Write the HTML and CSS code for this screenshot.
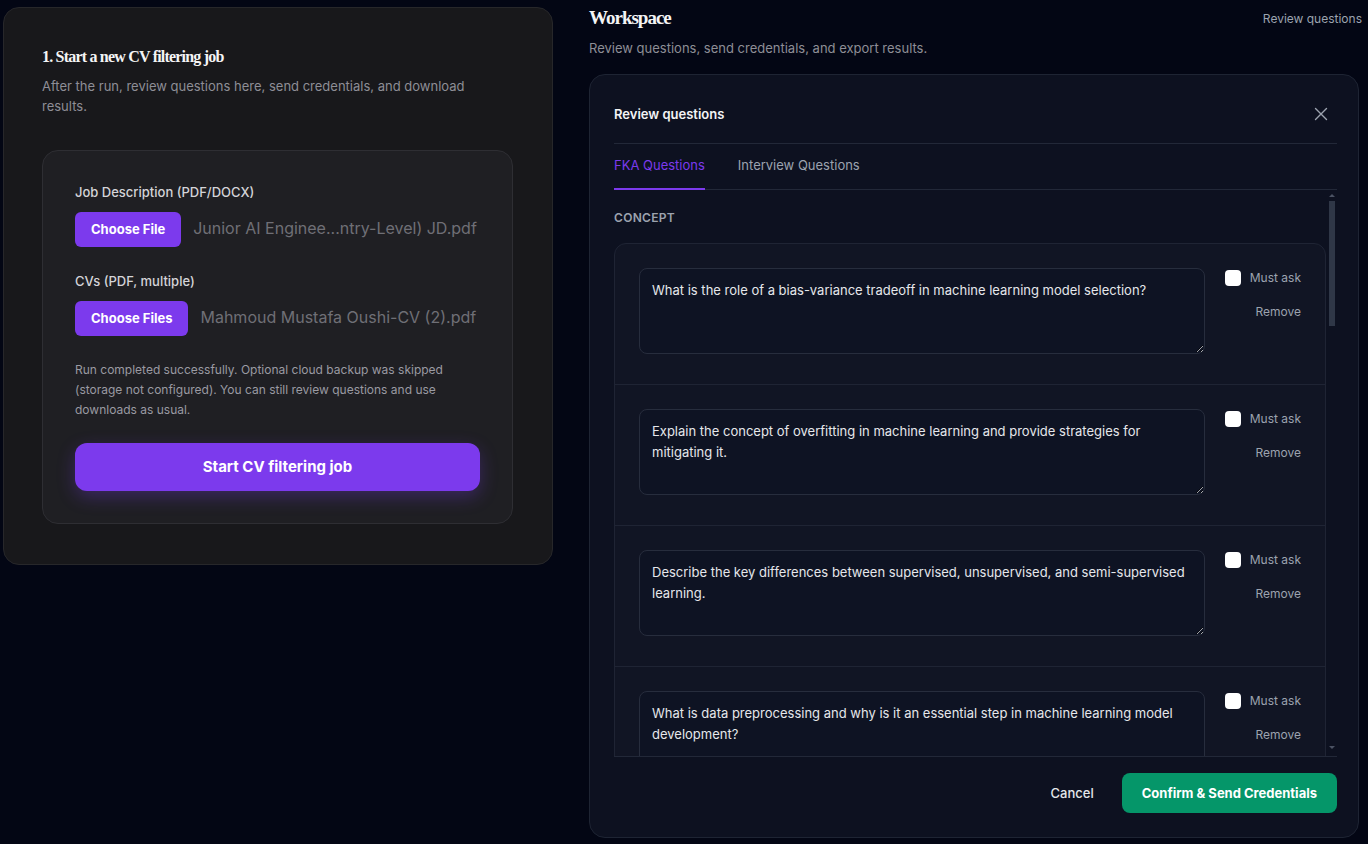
FILE: index.html
```html
<!DOCTYPE html>
<html lang="en">
<head>
    <meta charset="UTF-8">
    <meta name="viewport" content="width=device-width, initial-scale=1.0">
    <title>CV Filtering</title>
    <link rel="stylesheet" href="styles.css">
</head>
<body>
    <div class="page">
        <section class="start-card">
            <h2 class="serif-title">1. Start a new CV filtering job</h2>
            <p class="muted">After the run, review questions here, send credentials, and download results.</p>

            <div class="upload-card">
                <label class="field-label">Job Description (PDF/DOCX)</label>
                <div class="file-row">
                    <button class="file-btn">Choose File</button>
                    <span class="file-name">Junior AI Enginee...ntry-Level) JD.pdf</span>
                </div>

                <label class="field-label second">CVs (PDF, multiple)</label>
                <div class="file-row">
                    <button class="file-btn">Choose Files</button>
                    <span class="file-name">Mahmoud Mustafa Oushi-CV (2).pdf</span>
                </div>

                <p class="status">Run completed successfully. Optional cloud backup was skipped (storage not configured). You can still review questions and use downloads as usual.</p>

                <button class="start-btn">Start CV filtering job</button>
            </div>
        </section>

        <section class="workspace">
            <div class="workspace-head">
                <h2 class="serif-title big">Workspace</h2>
                <span class="crumb">Review questions</span>
            </div>
            <p class="muted ws-sub">Review questions, send credentials, and export results.</p>

            <div class="panel">
                <div class="panel-head">
                    <h3>Review questions</h3>
                    <button class="close-btn" aria-label="Close">
                        <svg width="14" height="14" viewBox="0 0 14 14" fill="none" stroke="#9ca3af" stroke-width="1.4" stroke-linecap="round">
                            <path d="M1.5 1.5 L12.5 12.5 M12.5 1.5 L1.5 12.5"/>
                        </svg>
                    </button>
                </div>

                <div class="tabs">
                    <button class="tab active">FKA Questions</button>
                    <button class="tab">Interview Questions</button>
                </div>

                <div class="scroll-wrap">
                    <div class="scroll-area">
                        <h4 class="group-title">Concept</h4>
                        <div class="q-list">
                            <div class="q-item">
                                <textarea class="q-text">What is the role of a bias-variance tradeoff in machine learning model selection?</textarea>
                                <div class="q-controls">
                                    <label class="must"><span class="check"></span>Must ask</label>
                                    <button class="remove">Remove</button>
                                </div>
                            </div>
                            <div class="q-item">
                                <textarea class="q-text">Explain the concept of overfitting in machine learning and provide strategies for mitigating it.</textarea>
                                <div class="q-controls">
                                    <label class="must"><span class="check"></span>Must ask</label>
                                    <button class="remove">Remove</button>
                                </div>
                            </div>
                            <div class="q-item">
                                <textarea class="q-text">Describe the key differences between supervised, unsupervised, and semi-supervised learning.</textarea>
                                <div class="q-controls">
                                    <label class="must"><span class="check"></span>Must ask</label>
                                    <button class="remove">Remove</button>
                                </div>
                            </div>
                            <div class="q-item">
                                <textarea class="q-text">What is data preprocessing and why is it an essential step in machine learning model development?</textarea>
                                <div class="q-controls">
                                    <label class="must"><span class="check"></span>Must ask</label>
                                    <button class="remove">Remove</button>
                                </div>
                            </div>
                        </div>
                    </div>
                    <!-- drawn scrollbar, the list is longer than the view -->
                    <div class="scrollbar">
                        <span class="arrow up"></span>
                        <span class="thumb"></span>
                        <span class="arrow down"></span>
                    </div>
                </div>

                <div class="panel-foot">
                    <button class="cancel-btn">Cancel</button>
                    <button class="confirm-btn">Confirm &amp; Send Credentials</button>
                </div>
            </div>
        </section>
    </div>
</body>
</html>
```

FILE: styles.css
```css
* {
    box-sizing: border-box;
}

body {
    margin: 0;
    background-color: #030614;
    color: #e5e7eb;
    font-family: Inter, "Noto Sans", sans-serif;
    height: 100vh;
    overflow: hidden;
}

button {
    font-family: inherit;
    cursor: pointer;
}

.page {
    display: grid;
    grid-template-columns: 550px 770px;
    column-gap: 36px;
    align-items: start;
    padding: 7px 0 0 3px;
}

.serif-title {
    margin: 0;
    font-family: "Liberation Serif", "DejaVu Serif", serif;
    font-weight: 700;
    font-size: 16px;
    letter-spacing: -0.8px;
    color: #f4f4f5;
    line-height: 20px;
}

.serif-title.big {
    font-size: 19px;
    letter-spacing: -1px;
}

.muted {
    margin: 0;
    color: #8e8e96;
    font-size: 13px;
    line-height: 20px;
}

/* left card */
.start-card {
    background-color: #18181b;
    border: 1px solid #27272a;
    border-radius: 16px;
    padding: 39px 39px 40px 38px;
}

.start-card .muted {
    margin-top: 9px;
    padding-right: 40px;
}

.upload-card {
    margin-top: 34px;
    background-color: #1f1f23;
    border: 1px solid #2e2e33;
    border-radius: 16px;
    padding: 33px 32px 32px 32px;
}

.field-label {
    display: block;
    font-size: 13px;
    font-weight: 500;
    line-height: 16px;
    color: #d4d4d8;
    margin-bottom: 12px;
}

.field-label.second {
    margin-top: 26px;
}

.file-row {
    display: flex;
    align-items: center;
    gap: 12px;
}

.file-btn {
    background-color: #7c3aed;
    color: #fff;
    border: none;
    border-radius: 6px;
    font-size: 13px;
    font-weight: 700;
    height: 35px;
    padding: 0 16px 1px 16px;
}

.file-name {
    font-size: 16px;
    line-height: 20px;
    color: #6f6f76;
    margin-top: -4px;
}

.status {
    margin: 24px 0 0 0;
    font-size: 12px;
    line-height: 20px;
    color: #9a9aa2;
}

.start-btn {
    display: block;
    width: 100%;
    height: 48px;
    margin-top: 23px;
    background-color: #7c3aed;
    color: #fff;
    border: none;
    border-radius: 12px;
    font-size: 15px;
    font-weight: 700;
    padding-bottom: 2px;
    box-shadow: 0 6px 18px rgba(124, 58, 237, 0.3);
}

/* workspace */
.workspace-head {
    display: flex;
    justify-content: space-between;
    align-items: center;
    padding-top: 1px;
}

.crumb {
    font-size: 12px;
    color: #9ca3af;
    margin-right: -3px;
}

.ws-sub {
    margin-top: 10px;
}

.panel {
    margin-top: 16px;
    height: 764px;
    background-color: #0d1120;
    border: 1px solid #1e2433;
    border-radius: 16px;
    padding: 23px 21px 0 24px;
    display: flex;
    flex-direction: column;
}

.panel-head {
    display: flex;
    justify-content: space-between;
    align-items: center;
    height: 32px;
    padding-bottom: 13px;
    border-bottom: 1px solid #222838;
    box-sizing: content-box;
}

.panel-head h3 {
    margin: 0;
    font-size: 13px;
    font-weight: 600;
    color: #f3f4f6;
}

.close-btn {
    background: none;
    border: none;
    width: 32px;
    height: 32px;
    display: flex;
    align-items: center;
    justify-content: center;
}

.tabs {
    display: flex;
    gap: 33px;
    border-bottom: 1px solid #222838;
}

.tab {
    background: none;
    border: none;
    padding: 12px 0 13px 0;
    font-size: 13px;
    line-height: 19px;
    color: #9ca3af;
    border-bottom: 2px solid transparent;
    margin-bottom: -1px;
}

.tab.active {
    color: #7c3aed;
    border-bottom-color: #7c3aed;
}

.scroll-wrap {
    position: relative;
    flex: 1;
    min-height: 0;
}

.scroll-area {
    height: 100%;
    overflow: hidden;
    padding: 20px 11px 0 0;
}

.scrollbar {
    position: absolute;
    top: 0;
    right: 0;
    bottom: 0;
    width: 10px;
}

.thumb {
    position: absolute;
    left: 2px;
    top: 11px;
    width: 6px;
    height: 125px;
    background-color: #2f3747;
}

.arrow {
    position: absolute;
    left: 2px;
    width: 0;
    height: 0;
    border-left: 3px solid transparent;
    border-right: 3px solid transparent;
}

.arrow.up {
    top: 4px;
    border-bottom: 3px solid #4b5263;
}

.arrow.down {
    bottom: 7px;
    border-top: 3px solid #4b5263;
}

.group-title {
    margin: 0 0 17px 0;
    font-size: 12px;
    font-weight: 600;
    line-height: 16px;
    letter-spacing: 0.3px;
    text-transform: uppercase;
    color: #9ca3af;
}

.q-list {
    background-color: #111524;
    border: 1px solid #1f2434;
    border-radius: 12px;
    margin-bottom: 24px;
}

.q-item {
    display: flex;
    gap: 20px;
    padding: 24px 24px 30px 24px;
    border-bottom: 1px solid #1f2434;
}

.q-item:last-child {
    border-bottom: none;
}

.q-text {
    display: block;
    flex: 1;
    height: 86px;
    background-color: #0e1323;
    border: 1px solid #272d3d;
    border-radius: 8px;
    color: #e5e7eb;
    font-family: inherit;
    font-size: 13px;
    line-height: 21px;
    padding: 11px 12px;
    resize: vertical;
    outline: none;
}

.q-controls {
    width: 76px;
    display: flex;
    flex-direction: column;
    align-items: flex-end;
    gap: 18px;
    padding-top: 2px;
}

.must {
    display: flex;
    align-items: center;
    gap: 9px;
    font-size: 12px;
    color: #9ca3af;
    line-height: 16px;
    white-space: nowrap;
}

.check {
    width: 16px;
    height: 16px;
    background-color: #fff;
    border-radius: 4px;
}

.remove {
    background: none;
    border: none;
    padding: 0;
    font-size: 12px;
    color: #9ca3af;
    line-height: 16px;
}

.panel-foot {
    border-top: 1px solid #222838;
    display: flex;
    justify-content: flex-end;
    align-items: center;
    gap: 12px;
    padding: 16px 0 24px 0;
}

.cancel-btn {
    background: none;
    border: none;
    color: #e5e7eb;
    font-size: 13px;
    font-weight: 500;
    height: 40px;
    padding: 0 16px;
}

.confirm-btn {
    background-color: #059669;
    border: none;
    color: #fff;
    font-size: 13px;
    font-weight: 700;
    height: 40px;
    padding: 0 20px;
    border-radius: 8px;
}
```
